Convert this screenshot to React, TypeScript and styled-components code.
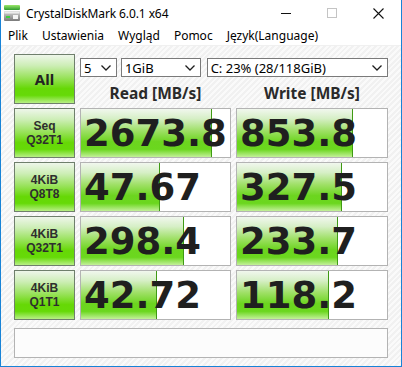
import React from 'react'
import { createGlobalStyle, styled } from 'styled-components'

const GlobalStyle = createGlobalStyle`
  html, body { margin: 0; padding: 0; background: #ffffff; }
  body { font-family: "Noto Sans", "DejaVu Sans", sans-serif; }
`

type Result = { label: [string, string]; read: string; write: string; readPct: number; writePct: number }

const results: Result[] = [
  { label: ['Seq', 'Q32T1'], read: '2673.8', write: '853.8', readPct: 88, writePct: 77 },
  { label: ['4KiB', 'Q8T8'], read: '47.67', write: '327.5', readPct: 53, writePct: 70 },
  { label: ['4KiB', 'Q32T1'], read: '298.4', write: '233.7', readPct: 69, writePct: 67 },
  { label: ['4KiB', 'Q1T1'], read: '42.72', write: '118.2', readPct: 51, writePct: 61 },
]

const menuItems = ['Plik', 'Ustawienia', 'Wygląd', 'Pomoc', 'Język(Language)']

const AppIcon = () => (
  <svg width="16" height="16" viewBox="0 0 16 16">
    <defs>
      <linearGradient id="ig" x1="0" y1="0" x2="0" y2="1">
        <stop offset="0" stopColor="#9be86a" />
        <stop offset="1" stopColor="#2f9a2f" />
      </linearGradient>
      <linearGradient id="ib" x1="0" y1="0" x2="0" y2="1">
        <stop offset="0" stopColor="#d6d6d6" />
        <stop offset="1" stopColor="#7a7a7a" />
      </linearGradient>
    </defs>
    <rect x="0" y="0" width="16" height="5" rx="1" fill="url(#ig)" />
    <rect x="0" y="6" width="16" height="10" rx="1" fill="url(#ib)" />
    <rect x="0.5" y="6.5" width="15" height="2" fill="#ececec" />
    <rect x="2" y="11" width="4" height="2" fill="#3fcf3f" />
    <rect x="9" y="10" width="5" height="4" fill="#f4f4f4" />
  </svg>
)

const Chevron = () => (
  <svg width="10" height="6" viewBox="0 0 10 6">
    <polyline points="0.5,0.5 5,5 9.5,0.5" fill="none" stroke="#1e1e1e" strokeWidth="1.3" />
  </svg>
)

const App = () => {
  return (
    <Window>
      <GlobalStyle />
      <TitleBar>
        <AppIcon />
        <Title>CrystalDiskMark 6.0.1 x64</Title>
        <Controls>
          <CtrlButton>
            <svg width="10" height="10" viewBox="0 0 10 10">
              <line x1="0" y1="5.5" x2="10" y2="5.5" stroke="#111" strokeWidth="1" />
            </svg>
          </CtrlButton>
          <CtrlButton>
            <svg width="10" height="10" viewBox="0 0 10 10">
              <rect x="0.5" y="0.5" width="9" height="9" fill="none" stroke="#c4c4c4" strokeWidth="1" />
            </svg>
          </CtrlButton>
          <CtrlButton>
            <svg width="11" height="11" viewBox="0 0 11 11">
              <path d="M0.5 0.5 L10.5 10.5 M10.5 0.5 L0.5 10.5" stroke="#111" strokeWidth="1.1" />
            </svg>
          </CtrlButton>
        </Controls>
      </TitleBar>
      <MenuBar>
        {menuItems.map((m) => (
          <MenuItem key={m}>{m}</MenuItem>
        ))}
      </MenuBar>
      <Content>
        <Grid>
          <GreenButton>
            <AllText>All</AllText>
          </GreenButton>
          <HeaderArea>
            <SelectRow>
              <Select $w={37}>
                <span>5</span>
                <Chevron />
              </Select>
              <Select $w={80}>
                <span>1GiB</span>
                <Chevron />
              </Select>
              <Select $w={182} $gap={6}>
                <span>C: 23% (28/118GiB)</span>
                <Chevron />
              </Select>
            </SelectRow>
            <HeaderLabels>
              <HeaderLabel>Read [MB/s]</HeaderLabel>
              <HeaderLabel>Write [MB/s]</HeaderLabel>
            </HeaderLabels>
          </HeaderArea>
          {results.map((r) => (
            <React.Fragment key={r.label.join('-') + r.read}>
              <GreenButton $column>
                <LabelLine>{r.label[0]}</LabelLine>
                <LabelLine>{r.label[1]}</LabelLine>
              </GreenButton>
              <ValueBox>
                <Bar style={{ width: `${r.readPct}%` }} />
                <Value>{r.read}</Value>
              </ValueBox>
              <ValueBox>
                <Bar style={{ width: `${r.writePct}%` }} />
                <Value>{r.write}</Value>
              </ValueBox>
            </React.Fragment>
          ))}
        </Grid>
        <CommentBox />
      </Content>
    </Window>
  )
}

export default App

const Window = styled.div`
  width: 402px;
  height: 367px;
  box-sizing: border-box;
  border: 1px solid #1883d7;
  border-top: none;
  display: flex;
  flex-direction: column;
  background: #ffffff;
  overflow: hidden;
`

const TitleBar = styled.div`
  height: 26px;
  display: flex;
  align-items: center;
  padding-left: 3px;
  background: #ffffff;
`

const Title = styled.div`
  margin-left: 6px;
  font-size: 12px;
  color: #000;
  letter-spacing: -0.1px;
`

const Controls = styled.div`
  margin-left: auto;
  display: flex;
  align-self: stretch;
`

const CtrlButton = styled.div`
  width: 46px;
  display: flex;
  align-items: center;
  justify-content: center;
`

const MenuBar = styled.div`
  height: 19px;
  display: flex;
  align-items: center;
  border-bottom: 1px solid #f0f0f0;
`

const MenuItem = styled.div`
  padding: 0 7px;
  font-size: 12px;
  color: #000;
`

const Content = styled.div`
  flex: 1;
  padding: 8px 13px;
  display: flex;
  flex-direction: column;
  background: repeating-linear-gradient(135deg, #f1f1f1 0px, #f1f1f1 2px, #fafafa 2px, #fafafa 4px);
`

const Grid = styled.div`
  display: grid;
  grid-template-columns: 61px 151px 152px;
  grid-auto-rows: 50px;
  column-gap: 5px;
  row-gap: 4px;
`

const GreenButton = styled.div<{ $column?: boolean }>`
  box-sizing: border-box;
  border: 1px solid #6f7f6c;
  background: linear-gradient(
    to bottom,
    #eef6ea 0%,
    #cdeeb6 22%,
    #98e25a 48%,
    #66d806 70%,
    #66da08 84%,
    #b8ef86 100%
  );
  display: flex;
  flex-direction: ${(p) => (p.$column ? 'column' : 'row')};
  align-items: center;
  justify-content: center;
  text-align: center;
`

const AllText = styled.span`
  font-weight: 700;
  font-size: 15px;
  color: #222;
`

const LabelLine = styled.div`
  font-family: "Liberation Sans", Arial, sans-serif;
  font-weight: 700;
  font-size: 12px;
  line-height: 14px;
  height: 14px;
  color: #2e2e2e;
`

const HeaderArea = styled.div`
  grid-column: 2 / span 2;
  display: flex;
  flex-direction: column;
`

const SelectRow = styled.div`
  display: flex;
  margin-top: 4px;
  height: 19px;
`

const Select = styled.div<{ $w: number; $gap?: number }>`
  box-sizing: border-box;
  width: ${(p) => p.$w}px;
  margin-left: ${(p) => p.$gap ?? 4}px;
  &:first-child { margin-left: 0; }
  border: 1px solid #7a7a7a;
  background: #ffffff;
  display: flex;
  align-items: center;
  justify-content: space-between;
  padding: 0 5px 0 3px;
  font-size: 13px;
  color: #000;
`

const HeaderLabels = styled.div`
  flex: 1;
  display: grid;
  grid-template-columns: 151px 152px;
  column-gap: 5px;
  align-items: center;
  padding-top: 4px;
`

const HeaderLabel = styled.div`
  text-align: center;
  font-weight: 700;
  font-size: 15.5px;
  color: #2a2a2a;
`

const ValueBox = styled.div`
  position: relative;
  box-sizing: border-box;
  border: 1px solid #b3b3b3;
  background: #ffffff;
  display: flex;
  align-items: center;
  overflow: hidden;
`

const Bar = styled.div`
  position: absolute;
  left: 0;
  top: 0;
  bottom: 0;
  box-sizing: border-box;
  border-right: 1px solid #3f9a14;
  background: linear-gradient(
    to bottom,
    #f1f7ee 0%,
    #d6efc6 20%,
    #9fe067 45%,
    #6cd51f 68%,
    #6bd71e 84%,
    #c3f09a 100%
  );
`

const Value = styled.div`
  position: relative;
  padding-left: 3px;
  font-family: "DejaVu Sans", sans-serif;
  font-weight: 700;
  font-size: 37px;
  line-height: 1;
  color: #1f1f1f;
  white-space: nowrap;
`

const CommentBox = styled.div`
  margin-top: 8px;
  height: 30px;
  box-sizing: border-box;
  border: 1px solid #b3b3b3;
  background: #fcfcfc;
`
